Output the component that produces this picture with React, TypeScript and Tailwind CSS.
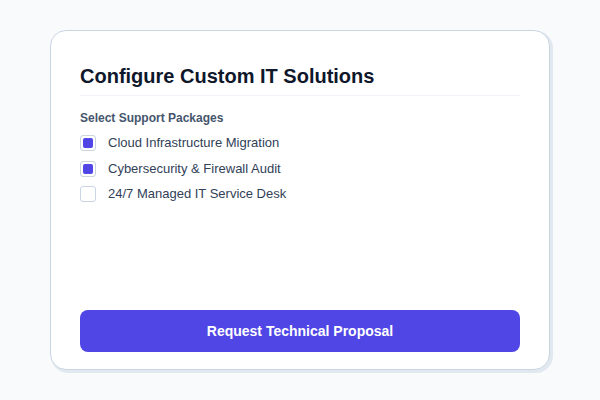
import { useState } from "react";

const PACKAGES = [
  { id: "cloud", label: "Cloud Infrastructure Migration", checked: true },
  { id: "sec", label: "Cybersecurity & Firewall Audit", checked: true },
  { id: "desk", label: "24/7 Managed IT Service Desk", checked: false },
];

export default function App() {
  const [selected, setSelected] = useState<Record<string, boolean>>(
    Object.fromEntries(PACKAGES.map((p) => [p.id, p.checked]))
  );

  return (
    <div
      className="min-h-screen w-full bg-slate-50 flex items-center justify-center"
      style={{ fontFamily: '"Liberation Sans", Arial, sans-serif' }}
    >
      <div className="w-[500px] h-[340px] bg-white border border-slate-300 rounded-2xl shadow-[2px_2px_0_1px_#e2e8f0] flex flex-col px-[29px] pt-[31px] pb-[17px]">
        <h1 className="text-xl font-bold text-slate-900 pb-[5px] border-b border-slate-100">
          Configure Custom IT Solutions
        </h1>

        <p className="mt-[13px] text-[12px] font-bold text-slate-600">Select Support Packages</p>

        <div className="mt-[6px] flex flex-col gap-[5.5px]">
          {PACKAGES.map((p) => (
            <label key={p.id} className="flex items-center gap-[12px] cursor-pointer h-[20px]">
              <button
                type="button"
                onClick={() => setSelected((s) => ({ ...s, [p.id]: !s[p.id] }))}
                className="w-4 h-4 rounded-[3px] border border-slate-300 bg-white p-[2px] flex"
              >
                {selected[p.id] && <span className="flex-1 rounded-[2px] bg-[#4f46e5]" />}
              </button>
              <span className="text-[13px] text-slate-700">{p.label}</span>
            </label>
          ))}
        </div>

        <button
          type="button"
          className="mt-auto h-[42px] w-full rounded-lg bg-[#4f46e5] text-white font-bold text-[14px]"
        >
          Request Technical Proposal
        </button>
      </div>
    </div>
  );
}
